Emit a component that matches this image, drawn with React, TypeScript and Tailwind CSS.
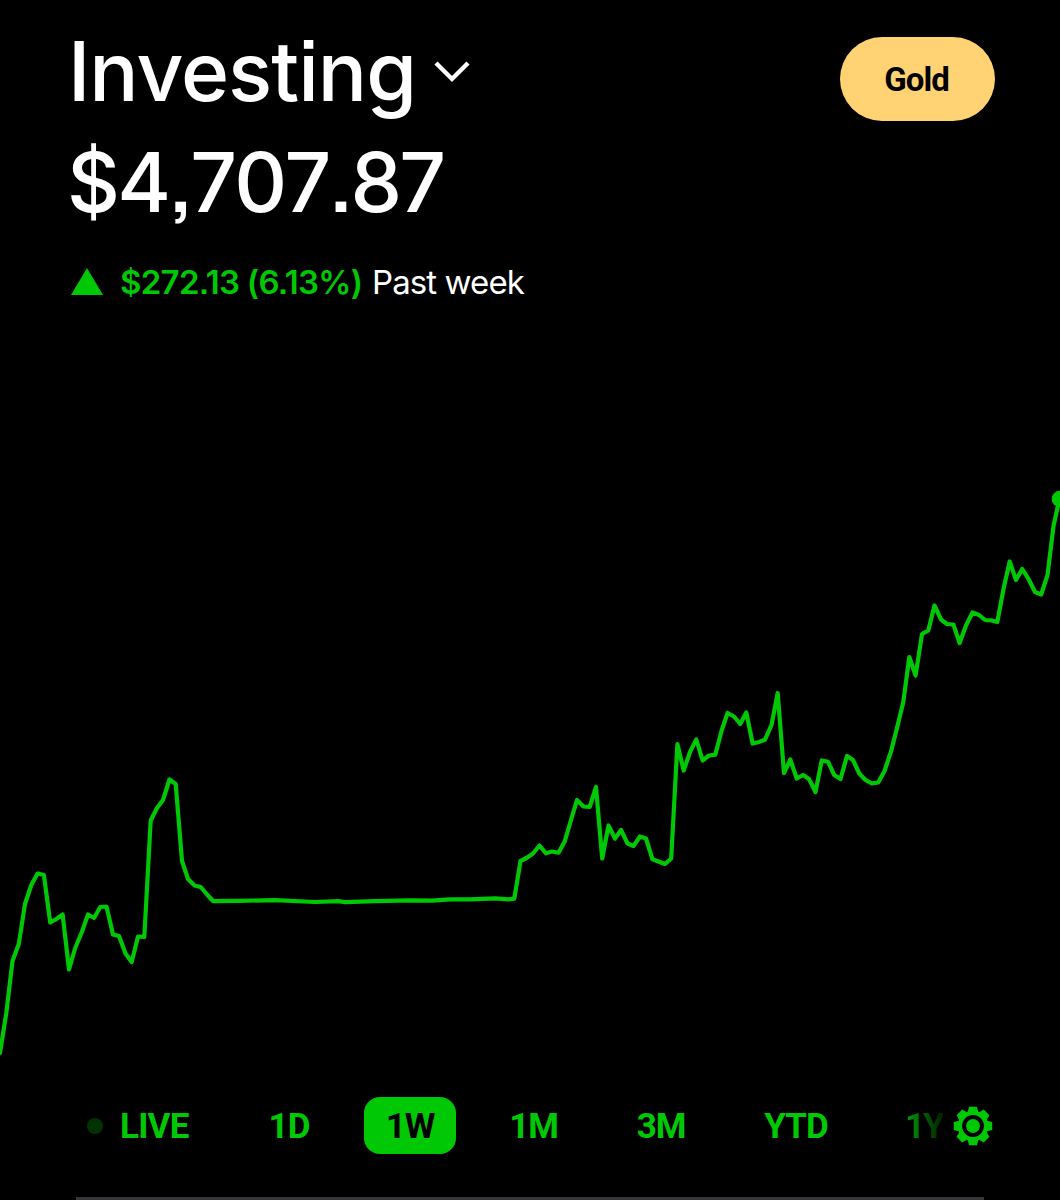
import React, { useState } from 'react';

const points: [number, number][] = [
  [0, 1053], [6.3, 1013], [12.5, 961], [18.8, 944], [25, 904], [31.3, 885], [37.6, 873.5], [43.9, 875],
  [50.2, 922.5], [56.4, 919], [62.6, 914.5], [69, 969.5], [75.2, 948], [81.5, 933], [88, 914.5], [94, 918],
  [100.3, 907], [106.5, 906.5], [113, 934.5], [119, 936], [125.5, 953.5], [131.7, 962], [138, 936.5],
  [144.3, 937], [150.7, 820.5], [157, 808], [163, 800], [169.5, 779.5], [175.7, 784], [182, 861],
  [188, 879], [194.5, 885.5], [200.7, 887], [207, 894.5], [213.3, 901.2], [238, 900.8], [275, 900.2],
  [315, 902], [338, 901.2], [345, 902.2], [375, 901.2], [410, 900.3], [432, 900.6], [450, 899.3],
  [470, 899.3], [495, 898.4], [508, 899.3], [514.3, 898.7], [520.5, 861], [526.5, 858], [533, 853.5],
  [539.5, 845.5], [545.8, 853.3], [552, 851.5], [558.5, 852.7], [564.7, 841.5], [571, 820], [577, 800],
  [583.5, 806.5], [589.7, 807], [596, 787], [602.2, 858.5], [608.5, 825.5], [615, 838.5], [621, 830],
  [627.5, 843.5], [633.5, 846], [640, 836.5], [646, 838.5], [652.5, 859.3], [665, 864], [671.2, 858.5],
  [677.4, 744], [683.7, 770.5], [690, 752], [696.3, 739.5], [702.6, 760.5], [709, 755.5], [715.3, 754.7],
  [721.5, 731], [727.6, 713], [734, 716.5], [740.3, 724], [746.3, 712.5], [752.6, 743.5], [759, 742],
  [765, 739.7], [771.5, 725], [777.7, 693], [784, 773], [790.3, 759.5], [796.7, 778.5], [803, 775],
  [809, 779], [815.5, 792], [821.7, 760.5], [828, 761.7], [834.2, 775], [840.5, 779], [847, 756],
  [853, 760], [859.3, 773.5], [865.5, 780], [871.8, 783.3], [878.3, 782.5], [884.5, 771], [891, 751.5],
  [897, 728], [903.3, 702], [909.3, 657], [915.6, 675.5], [922, 634], [928.3, 630.5], [934.5, 605.5],
  [941, 619.5], [947, 624], [953.4, 624.5], [959.6, 643], [966, 625.5], [972.5, 612.5], [979, 615],
  [985, 620], [991, 620.3], [997.3, 622], [1003.5, 589], [1009.7, 561.5], [1016, 580], [1022.3, 569],
  [1028.5, 579], [1035, 592], [1041.2, 594.5], [1047.5, 575], [1053.5, 526], [1059, 501]
];

const ranges = [
  { label: '1D', box: 'w-[86px]' },
  { label: '1W', box: 'w-[92px]' },
  { label: '1M', box: 'w-[91px]' },
  { label: '3M', box: 'w-[100px]' },
  { label: 'YTD', box: 'w-[106px]' }
];

const toothAngles = [0, 45, 90, 135, 180, 225, 270, 315];

const GearIcon = () => (
  <svg width="40" height="40" viewBox="-20 -20 40 40" fill="#00c805">
    <circle r="13" fill="none" stroke="#00c805" strokeWidth="4.2" />
    <circle r="6.9" />
    {toothAngles.map(angle => (
      <path key={angle} d="M-5.6 -13L-4 -19.2H4L5.6 -13Z" transform={`rotate(${angle})`} />
    ))}
  </svg>
);

const PriceChart = () => (
  <svg width="1060" height="640" viewBox="0 440 1060 640" className="block shrink-0">
    <polyline
      points={points.map(p => p.join(',')).join(' ')}
      fill="none"
      stroke="#00c805"
      strokeWidth="4.2"
      strokeLinejoin="round"
      strokeLinecap="round"
    />
    <circle cx="1060" cy="499" r="8.3" fill="#00c805" />
  </svg>
);

const App = () => {
  const [range, setRange] = useState('1W');

  return (
    <div className="w-[1060px] h-[1200px] bg-black overflow-hidden flex flex-col font-['Inter',sans-serif] text-white">
      <header className="flex justify-between h-[440px] pl-[70px] pr-[65px] pt-[22px] shrink-0">
        <div className="whitespace-nowrap [font-feature-settings:'ss07']">
          <button className="flex items-center h-[100px] -ml-[2px]">
            <span className="w-[347px] text-left text-[82px] font-[450] leading-[100px] tracking-[-1px]">Investing</span>
            <svg width="36" height="24" viewBox="0 0 36 24" className="ml-[19px]" fill="none" stroke="white" strokeWidth="4.4">
              <path d="M2 3L18 19L34 3" />
            </svg>
          </button>
          <p className="-ml-[3px] text-[82px] font-[450] leading-[100px] tracking-[-2.8px] mt-[11px] [font-kerning:none]">$4,707.87</p>
          <div className="flex items-center mt-[29px] h-10 text-[33px] leading-10">
            <svg width="34" height="28" viewBox="0 0 34 28" fill="#00c805">
              <path d="M17 0L33 27H1Z" />
            </svg>
            <span className="ml-4 w-[242px] font-semibold text-[#00c805] tracking-[-0.7px]">$272.13 (6.13%)</span>
            <span className="ml-[10px] font-normal tracking-[-0.9px]">Past week</span>
          </div>
        </div>
        <button className="w-[155px] h-[84px] mt-[15px] pt-[2px] pr-[2px] rounded-full bg-[#ffd274] text-black font-['Roboto',sans-serif] font-bold text-[33px] tracking-[-1px]">
          Gold
        </button>
      </header>

      <PriceChart />

      <nav className="flex items-center h-[91px] pl-[87px] pr-[67px] font-['Roboto',sans-serif] font-bold text-[35px] tracking-[-1px] text-[#00c805] shrink-0">
        <div className="flex items-center">
          <span className="w-4 h-4 rounded-full bg-[#003202]" />
          <span className="ml-[17px] w-[69px] pt-[3px] tracking-[-0.8px]">LIVE</span>
        </div>
        <div className="flex items-center gap-[32px] ml-[57px]">
          {ranges.map(({ label, box }) => (
            <button
              key={label}
              onClick={() => setRange(label)}
              className={`${box} h-[57px] pt-[3px] rounded-[16px] ${range === label ? 'bg-[#00c805] text-black' : ''}`}
            >
              {label}
            </button>
          ))}
        </div>
        <span className="ml-[56px] pt-[3px] bg-linear-to-r from-[#00a004] to-[#002401] bg-clip-text text-transparent tracking-[-2px]">1Y</span>
        <button className="ml-auto">
          <GearIcon />
        </button>
      </nav>

      <div className="mt-auto ml-[76px] w-[908px] h-[3px] bg-[#36363a] shrink-0" />
    </div>
  );
};

export default App;
